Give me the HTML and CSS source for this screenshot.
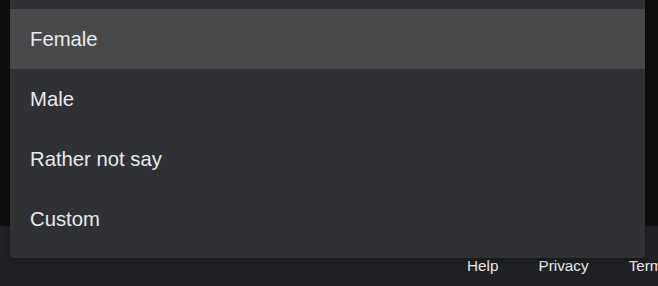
FILE: index.html
```html
<!DOCTYPE html>
<html lang="en">
<head>
<meta charset="utf-8">
<title>Gender</title>
<link rel="stylesheet" href="styles.css">
</head>
<body>
  <main class="page">
    <ul class="menu" role="listbox">
      <li class="option is-active" role="option">Female</li>
      <li class="option" role="option">Male</li>
      <li class="option" role="option">Rather not say</li>
      <li class="option" role="option">Custom</li>
    </ul>
  </main>
  <footer class="footer">
    <div class="lang"></div>
    <nav class="links">
      <a class="link" href="#">Help</a>
      <a class="link" href="#">Privacy</a>
      <a class="link" href="#">Terms</a>
    </nav>
  </footer>
</body>
</html>
```
FILE: styles.css
```css
html, body {
  margin: 0;
  padding: 0;
}
body {
  width: 658px;
  height: 286px;
  overflow: hidden;
  background: #0f0f0f;
  font-family: "Liberation Sans", Arial, sans-serif;
  position: relative;
}
.page {
  height: 226px;
  background: #0f0f0f;
}
.menu {
  position: absolute;
  top: 0;
  left: 10px;
  width: 635px;
  margin: 0;
  padding: 9px 0;
  list-style: none;
  background: #303134;
  border-radius: 0 0 4px 4px;
  box-shadow: 0 2px 6px rgba(0, 0, 0, 0.35);
  z-index: 2;
}
.option {
  height: 60px;
  display: flex;
  align-items: center;
  padding-left: 20px;
  font-size: 20.3px;
  color: #e8eaed;
}
.option.is-active {
  background: #48494b;
}
.footer {
  height: 60px;
  background: #202124;
  display: flex;
  align-items: flex-start;
  white-space: nowrap;
}
.lang {
  width: 447px;
  flex: none;
}
.links {
  display: flex;
  padding-top: 31px;
}
.link {
  padding: 0 20px;
  font-size: 15.3px;
  color: #e8eaed;
  text-decoration: none;
}
```
